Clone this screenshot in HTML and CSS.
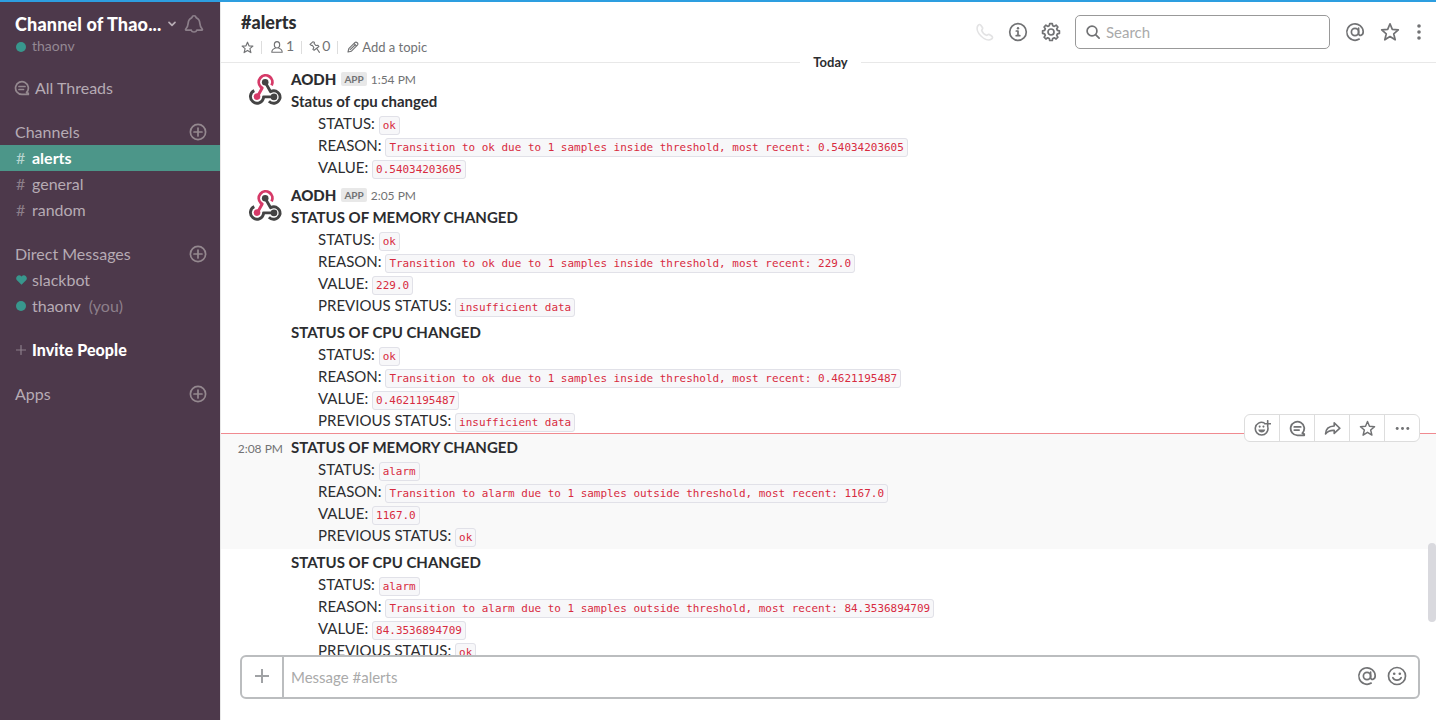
FILE: index.html
```html
<!DOCTYPE html>
<html lang="en">
<head>
<meta charset="utf-8">
<title>#alerts</title>
<link rel="stylesheet" href="styles.css">
</head>
<body>
<svg class="defs" width="0" height="0" aria-hidden="true">
  <symbol id="plus-circle" viewBox="0 0 18 18"><circle cx="9" cy="9" r="7.6"/><path d="M9 5v8M5 9h8"/></symbol>
  <symbol id="thread" viewBox="0 0 16 16"><path d="M12.6 12.4A6.4 6.4 0 1 0 8 14.4h6.3v-1.2z"/><path d="M5 6.5h6M5 9.5h4.5"/></symbol>
  <symbol id="star" viewBox="0 0 20 20"><path d="M10 1.8l2.3 5.6 6 .5-4.6 3.9 1.500 6-5.200-3.300-5.200 3.300 1.500-6L1.700 7.900l6-.5z"/></symbol>
  <symbol id="at" viewBox="0 0 20 20"><circle cx="10" cy="10" r="3.6"/><path d="M13.6 6.2v5.2c0 3 4.6 2.6 4.6-1.6a8.2 8.2 0 1 0-4 7.3"/></symbol>
  <symbol id="webhook" viewBox="0 0 36 36">
    <g class="hook-pink"><path d="M24.6 13.400A6.800 6.800 0 1 0 13.800 15l1.400 1L11 23.500"/><circle class="hook-pink-dot" cx="10" cy="24.600" r="3.300"/></g>
    <g class="hook-dark"><path d="M7.300 18.600A6.600 6.600 0 1 0 16.500 26v-1.100H26"/><path d="M18.400 10.600l5.200 9.100c5.600-2.800 11 2.500 9 7.600-2 4.700-7.700 5.100-10.700 2"/><circle class="hook-dark-dot" cx="18.200" cy="10.200" r="3.300"/><circle class="hook-dark-dot" cx="27" cy="24.900" r="3.300"/></g>
  </symbol>
</svg>
<div class="topline"></div>
<div class="app">
  <nav class="sidebar">
    <div class="team">
      <span class="team-name">Channel of Thao...</span>
      <svg class="chevron" viewBox="0 0 8 6"><path d="M1 1.3l3 3 3-3"/></svg>
      <svg class="bell" viewBox="0 0 20 20"><path d="M7.2 16.2H2.2c-.8 0-.8-.8-.3-1.3 3.2-2.8 1.4-6.4 3.2-9 .8-1.3 2.3-1.8 2.9-2.5.3-2.2 3.7-2.2 4 0 .6.7 2.1 1.2 2.9 2.5 1.8 2.6 0 6.2 3.2 9 .5.5.5 1.3-.3 1.3h-5c-.8 2.4-4.8 2.4-5.6 0"/></svg>
    </div>
    <div class="me"><i class="dot"></i><span>thaonv</span></div>
    <div class="threads"><svg><use href="#thread"/></svg><span>All Threads</span></div>
    <div class="heading"><span>Channels</span><svg><use href="#plus-circle"/></svg></div>
    <div class="item active"><i class="mark">#</i><span>alerts</span></div>
    <div class="item"><i class="mark">#</i><span>general</span></div>
    <div class="item"><i class="mark">#</i><span>random</span></div>
    <div class="heading spaced"><span>Direct Messages</span><svg><use href="#plus-circle"/></svg></div>
    <div class="item"><i class="mark"><svg class="heart" viewBox="0 0 11 10"><path d="M5.500 9.800L.7 5C-1.300 2.300 2.700-1.700 5.500 1.500 8.300-1.700 12.300 2.300 10.300 5z"/></svg></i><span>slackbot</span></div>
    <div class="item"><i class="mark"><i class="dot"></i></i><span>thaonv</span><span class="you">(you)</span></div>
    <div class="item invite"><i class="mark"><svg class="plus" viewBox="0 0 10 10"><path d="M5 .5v9M.5 5h9"/></svg></i><span>Invite People</span></div>
    <div class="heading spaced"><span>Apps</span><svg><use href="#plus-circle"/></svg></div>
  </nav>
  <main class="channel">
    <header class="header">
      <div class="title-block">
        <h1>#alerts</h1>
        <div class="meta">
          <svg class="m-star"><use href="#star"/></svg><i class="bar"></i>
          <svg class="m-user" viewBox="0 0 12 12"><ellipse cx="6" cy="3.8" rx="2.7" ry="3.2"/><path d="M4.2 7.2C2 7.8.8 8.700.8 11.300h10.400C11.200 8.700 10 7.800 7.800 7.200"/></svg><span class="count">1</span><i class="bar b2"></i>
          <svg class="m-pin" viewBox="0 0 12 12"><path d="M3.800.800L1 3.400l1.200 1 1-.2 1.600 2.200-.9 2 1.200.8 4.800-3.700-.9-1.300-2.200.3-1.700-2.200.3-1zM7.800 7.500l2.600 3.900"/></svg><span class="count zero">0</span><i class="bar b3"></i>
          <svg class="m-pencil" viewBox="0 0 12 12"><path d="M1 11l.8-3.400 6-6c1.500-1.500 4.100 1 2.600 2.600l-6 6zM7 2.500L9.500 5M3.200 8.700l4.300-4.200"/></svg><span class="topic">Add a topic</span>
        </div>
      </div>
      <div class="tools">
        <svg class="t-phone" viewBox="0 0 18 18"><path d="M2 2.500c1.300-1.500 2.300-1.200 3.200.2l1.300 2c.7 1.300-.8 1.800-.8 2.800.8 2.300 2.500 4 4.800 4.800 1 0 1.500-1.500 2.800-.8l2 1.300c1.400.9 1.700 1.900.2 3.200C9.500 20 -2 8.500 2 2.500z"/></svg>
        <svg class="t-info" viewBox="0 0 20 20"><circle cx="10" cy="10" r="8.300"/><path d="M8.300 9H10v4.500M8.200 13.700h3.600"/><circle class="fill" cx="10" cy="6.300" r="1.200"/></svg>
        <svg class="t-gear" viewBox="0 0 20 20"><circle cx="10" cy="10" r="3"/><path d="M8.300 3.700L8.700 1.700h2.600l.4 2 1.600.7 1.800-1.200 1.800 1.800-1.200 1.800.7 1.600 2 .4v2.600l-2 .4-.7 1.600 1.200 1.800-1.800 1.800-1.800-1.200-1.600.7-.4 2H8.700l-.4-2-1.600-.7-1.800 1.200-1.800-1.800 1.200-1.800-.7-1.600-2-.4V8.800l2-.4.7-1.600-1.200-1.800 1.800-1.800 1.800 1.200z"/></svg>
        <div class="search"><svg viewBox="0 0 14 14"><circle cx="6" cy="6" r="4.900"/><path d="M9.600 9.600l3.500 3.500"/></svg><span>Search</span></div>
        <svg class="t-at"><use href="#at"/></svg>
        <svg class="t-star"><use href="#star"/></svg>
        <svg class="t-more" viewBox="0 0 4 16"><circle cx="2" cy="2" r="1.800"/><circle cx="2" cy="8" r="1.800"/><circle cx="2" cy="14" r="1.800"/></svg>
      </div>
      <span class="today">Today</span>
    </header>
    <section class="messages">
      <article class="msg first">
        <div class="gutter"><svg class="avatar"><use href="#webhook"/></svg></div>
        <div class="body">
          <div class="author"><b>AODH</b><span class="badge">APP</span><time>1:54 PM</time></div>
          <h2>Status of cpu changed</h2>
          <p>STATUS: <code>ok</code></p>
          <p>REASON: <code>Transition to ok due to 1 samples inside threshold, most recent: 0.54034203605</code></p>
          <p>VALUE: <code>0.54034203605</code></p>
        </div>
      </article>
      <article class="msg">
        <div class="gutter"><svg class="avatar"><use href="#webhook"/></svg></div>
        <div class="body">
          <div class="author"><b>AODH</b><span class="badge">APP</span><time>2:05 PM</time></div>
          <h2>STATUS OF MEMORY CHANGED</h2>
          <p>STATUS: <code>ok</code></p>
          <p>REASON: <code>Transition to ok due to 1 samples inside threshold, most recent: 229.0</code></p>
          <p>VALUE: <code>229.0</code></p>
          <p>PREVIOUS STATUS: <code>insufficient data</code></p>
        </div>
      </article>
      <article class="msg">
        <div class="gutter"></div>
        <div class="body">
          <h2>STATUS OF CPU CHANGED</h2>
          <p>STATUS: <code>ok</code></p>
          <p>REASON: <code>Transition to ok due to 1 samples inside threshold, most recent: 0.4621195487</code></p>
          <p>VALUE: <code>0.4621195487</code></p>
          <p>PREVIOUS STATUS: <code>insufficient data</code></p>
        </div>
      </article>
      <article class="msg hover">
        <div class="gutter"><time>2:08 PM</time></div>
        <div class="body">
          <h2>STATUS OF MEMORY CHANGED</h2>
          <p>STATUS: <code>alarm</code></p>
          <p>REASON: <code>Transition to alarm due to 1 samples outside threshold, most recent: 1167.0</code></p>
          <p>VALUE: <code>1167.0</code></p>
          <p>PREVIOUS STATUS: <code>ok</code></p>
        </div>
        <div class="actions">
          <span><svg viewBox="0 0 18 18"><path d="M10.500 2.900A6.700 6.700 0 1 0 14.700 8M14.500.8v6.400M11.300 4h6.400"/><path class="fill" d="M4.500 10h7.400c-.4 4.300-7 4.300-7.400 0z"/><circle class="fill" cx="6" cy="7" r="1.100"/><circle class="fill" cx="10" cy="7" r="1.100"/></svg></span>
          <span><svg><use href="#thread"/></svg></span>
          <span><svg viewBox="0 0 18 16"><path d="M10.800 2l6 5.700-6 5.500V10C6.500 9.700 4 10.800 1.600 13.800 1.800 8.800 5 5.600 10.800 5.400z"/></svg></span>
          <span><svg><use href="#star"/></svg></span>
          <span><svg viewBox="0 0 16 16"><circle class="fill" cx="3" cy="8" r="1.400"/><circle class="fill" cx="8" cy="8" r="1.400"/><circle class="fill" cx="13" cy="8" r="1.400"/></svg></span>
        </div>
      </article>
      <article class="msg">
        <div class="gutter"></div>
        <div class="body">
          <h2>STATUS OF CPU CHANGED</h2>
          <p>STATUS: <code>alarm</code></p>
          <p>REASON: <code>Transition to alarm due to 1 samples outside threshold, most recent: 84.3536894709</code></p>
          <p>VALUE: <code>84.3536894709</code></p>
          <p>PREVIOUS STATUS: <code>ok</code></p>
        </div>
      </article>
      <div class="scroll-thumb"></div>
    </section>
    <footer class="composer">
      <div class="attach"><svg viewBox="0 0 16 16"><path d="M8 1v14M1 8h14"/></svg></div>
      <div class="input">Message #alerts</div>
      <svg class="c-at"><use href="#at"/></svg>
      <svg class="c-smile" viewBox="0 0 20 20"><circle cx="10" cy="10" r="8.500"/><path d="M5.800 11.700c1.500 3.300 6.900 3.300 8.400 0"/><circle class="fill" cx="7.200" cy="7.800" r="1.300"/><circle class="fill" cx="12.800" cy="7.800" r="1.300"/></svg>
    </footer>
  </main>
</div>
</body>
</html>
```
FILE: styles.css
```css
* { box-sizing: border-box; }
body { margin: 0; width: 1436px; height: 720px; overflow: hidden; background: #fff; color: #2c2d30; font: 15px/22px Lato, sans-serif; display: flex; flex-direction: column; }
h1, h2, p { margin: 0; }
i { font-style: normal; }
svg { display: block; fill: none; stroke: currentColor; stroke-width: 1.7; stroke-linejoin: round; stroke-linecap: round; flex: none; }
.fill { fill: currentColor; stroke: none; }
.defs { position: absolute; }
.topline { height: 2px; background: #2d9ee0; flex: none; }
.app { display: flex; flex: 1; min-height: 0; }

.sidebar { width: 220px; background: #4d394b; color: #b6abb4; font-size: 16px; line-height: 26px; flex: none; }
.team { display: flex; height: 30px; margin-top: 7px; padding-left: 15px; align-items: center; }
.team-name { width: 147px; font-size: 18px; line-height: 24px; padding-bottom: 1px; font-weight: 900; letter-spacing: .16px; color: #fff; white-space: nowrap; }
.chevron { width: 8px; height: 6px; margin-left: 6px; }
.bell { width: 20px; height: 20px; margin-left: 8px; color: #8c7f8a; }
.me { display: flex; align-items: center; height: 15px; padding-left: 16px; font-size: 14px; color: #948893; }
.me span { padding-bottom: 2px; }
.me .dot { margin-right: 6px; }
.dot { display: block; width: 10px; height: 10px; border-radius: 50%; background: #38978d; }
.threads { display: flex; align-items: center; height: 26px; margin: 21px 0 18px; padding-left: 14px; }
.threads svg { width: 16px; height: 16px; margin-right: 5px; color: #94888f; }
.heading { display: flex; align-items: center; justify-content: space-between; height: 26px; padding: 0 13px 0 15px; }
.heading svg { width: 18px; height: 18px; color: #94888f; }
.spaced { margin-top: 18px; }
.item { display: flex; align-items: center; height: 26px; padding-left: 16px; }
.mark { width: 16px; color: #8c7f8a; }
.active { background: #4c9689; color: #fff; font-weight: 700; }
.active .mark { color: #b7d5d0; font-weight: 400; }
.heart { width: 11px; height: 10px; fill: #38978d; stroke: none; }
.plus { width: 10px; height: 10px; stroke-width: 1.2; }
.you { margin-left: 8px; color: #8c7f8a; }
.invite { margin-top: 18px; color: #fff; font-weight: 900; letter-spacing: .07px; }

.channel { flex: 1; min-width: 0; display: flex; flex-direction: column; border-left: 1px solid #e8e8e8; }
.header { position: relative; height: 61px; flex: none; display: flex; justify-content: space-between; border-bottom: 1px solid #e8e8e8; padding: 0 14px 0 20px; }
.title-block { padding-top: 8px; }
h1 { height: 25px; font-size: 18px; line-height: 24px; font-weight: 900; }
.meta { display: flex; align-items: center; height: 24px; font-size: 14px; line-height: 22px; color: #717274; }
.meta svg { stroke-width: 1.1; }
.meta .m-star { width: 13px; height: 13px; stroke-width: 1.8; }
.bar { width: 1px; height: 13px; margin: 0 9px 0 7px; background: #ddd; }
.m-user { width: 12px; height: 12px; margin-right: 3px; }
.count { margin-top: -2px; }
.m-pin { width: 12px; height: 12px; margin-right: 1px; }
.b2 { margin: 0 7px 0 7px; }
.b3 { margin: 0 9px 0 7px; }
.m-pencil { width: 12px; height: 12px; margin-right: 3px; }
.topic { font-size: 13px; }
.tools { display: flex; align-items: center; height: 60px; color: #717274; }
.t-phone { width: 18px; height: 18px; color: #e3e3e4; margin-right: 14px; }
.t-info { width: 20px; height: 20px; margin-right: 13px; }
.t-gear { width: 20px; height: 20px; margin-right: 14px; }
.search { display: flex; align-items: center; width: 255px; height: 34px; padding-left: 10px; border: 1px solid #999; border-radius: 5px; margin-right: 15px; color: #aaa; }
.search svg { width: 14px; height: 14px; margin-right: 6px; color: #717274; }
.t-at, .t-star { width: 20px; height: 20px; margin-right: 15px; }
.t-star { margin-right: 17px; }
.t-more { width: 4px; height: 16px; fill: currentColor; stroke: none; margin-right: 1px; }
.today { position: absolute; left: 579px; top: 50px; width: 61px; text-align: center; background: #fff; font-size: 13px; line-height: 20px; font-weight: 700; z-index: 2; }

.messages { position: relative; flex: 1; min-height: 0; overflow: hidden; padding-top: 3px; }
.msg { position: relative; display: flex; padding: 2px 0 3px; }
.msg.first { padding-bottom: 4px; }
.gutter { width: 70px; flex: none; }
.avatar { width: 36px; height: 36px; margin: 4px 0 0 26px; stroke-width: 2.9; stroke-linecap: butt; }
.hook-pink { stroke: #d63a68; }
.hook-dark { stroke: #444; }
.hook-pink-dot { fill: #d63a68; stroke: none; }
.hook-dark-dot { fill: #444; stroke: none; }
.author { display: flex; align-items: center; height: 22px; }
.author b { font-weight: 900; }
.author time { padding-top: 2px; margin-left: -1px; }
.badge { margin: 0 5px 1px; height: 14px; padding: 0 3px; border-radius: 2px; background: #e8e8e8; color: #717274; font-size: 10px; line-height: 14px; font-weight: 700; }
time { font-size: 12px; color: #717274; }
h2 { font-size: 15px; line-height: 22px; font-weight: 700; }
p { height: 22px; padding-left: 27px; white-space: nowrap; }
code { font: 10.96px/14px "DejaVu Sans Mono", monospace; color: #d72b3f; background: #f7f7f9; border: 1px solid #e1e1e8; border-radius: 3px; padding: 2px 3px; }
.hover { background: #f9f9f9; }
.hover::before { content: ""; position: absolute; left: 0; right: 0; top: -1px; height: 1px; background: #f08a90; }
.hover time { display: block; width: 62px; text-align: right; line-height: 25px; }
.actions { position: absolute; right: 16px; top: -20px; width: 176px; height: 28px; display: flex; background: #fff; border: 1px solid #ddd; border-radius: 6px; color: #717274; }
.actions span { flex: 1; display: flex; align-items: center; justify-content: center; border-left: 1px solid #ddd; }
.actions span:first-child { border-left: 0; }
.actions svg { width: 17px; height: 17px; }
.scroll-thumb { position: absolute; right: 0; top: 480px; width: 8px; height: 79px; border-radius: 4px; background: #d9d9de; }

.composer { display: flex; align-items: center; height: 44px; margin: 0 16px 21px 19px; flex: none; border: 2px solid #bbbdbf; border-radius: 6px; color: #717274; }
.attach { width: 42px; height: 40px; padding-bottom: 2px; display: flex; align-items: center; justify-content: center; border-right: 2px solid #bbbdbf; color: #a0a2a5; }
.attach svg { width: 16px; height: 16px; stroke-width: 2; stroke-linecap: butt; }
.input { flex: 1; padding-left: 7px; color: #aaa; }
.c-at, .c-smile { width: 20px; height: 20px; margin: 0 10px 2px 0; }
.c-smile { margin-right: 11px; }
```
